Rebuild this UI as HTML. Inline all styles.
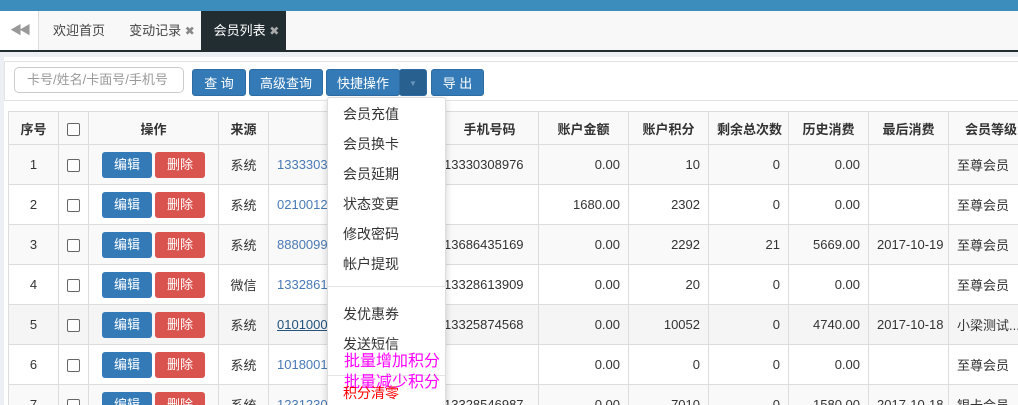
<!DOCTYPE html><html style="width:1018px;height:405px;overflow:hidden"><head><meta charset="utf-8"><style>
*{box-sizing:border-box;margin:0;padding:0}
body{width:1018px;height:405px;overflow:hidden;background:#ecf0f5;font-family:"Liberation Sans","Noto Sans CJK SC",sans-serif;font-size:13px;color:#333;position:relative}
.a{position:absolute}
.top{left:0;top:0;width:1018px;height:11px;background:#3c8dbc}
.tabs{left:0;top:11px;width:1018px;background:#f8f8f8;border-bottom:2px solid #222d32;height:41px}
.tab{top:11px;height:39px;line-height:39px;text-align:center;color:#444}
.x{color:#888;font-size:12px}
.panel{left:4px;top:57px;width:1014px;height:348px;background:#fff}
.btn{top:69px;height:27px;line-height:27px;background:#337ab7;color:#fff;border:1px solid #2e6da4;border-radius:3px;text-align:center}
table{position:absolute;left:8px;top:111px;border-collapse:collapse;table-layout:fixed;width:1040px}
td,th{border:1px solid #ddd;height:40px;padding:0 8px;white-space:nowrap;overflow:hidden}
th{height:33px;background:#f9f9f9;font-weight:bold;text-align:center}
tr:nth-child(even) td{background:#f9f9f9}
.c{text-align:center}.r{text-align:right}
.cb{display:inline-block;width:13px;height:13px;border:1px solid #666;border-radius:2px;background:#fff;vertical-align:middle}
.e,.d{display:inline-block;width:50px;height:26px;line-height:26px;color:#fff;border-radius:3px;text-align:center}
.e{background:#337ab7}.d{background:#d9534f;margin-left:3px}
.l{color:#4a7ab5}
.dd{left:327px;top:97px;width:119px;height:320px;background:#fff;border:1px solid #ddd;box-shadow:0 3px 8px rgba(0,0,0,.18);border-radius:3px}
.it{left:15px;font-size:14px;color:#333}
</style></head><body>
<div class="a top"></div>
<div class="a tabs"></div>
<div class="a" style="left:0;top:11px;width:39px;height:39px;background:#fff;border-right:1px solid #ddd;color:#999;text-align:center;line-height:39px;font-size:12px;letter-spacing:-3px">◀◀</div>
<div class="a tab" style="left:40px;width:78px">欢迎首页</div>
<div class="a tab" style="left:124px;width:76px">变动记录 <span class="x">✖</span></div>
<div class="a tab" style="left:201px;width:85px;background:#222d32;color:#fff;padding-left:6px">会员列表 <span class="x" style="color:#aaa">✖</span></div>
<div class="a panel"></div>
<div class="a" style="left:4px;top:61px;width:1014px;height:40px;border:1px solid #e3e3e3;border-right:none"></div>
<div class="a" style="left:14px;top:67px;width:170px;height:26px;border:1px solid #ccc;border-radius:5px;color:#999;line-height:24px;padding-left:12px">卡号/姓名/卡面号/手机号</div>
<div class="a btn" style="left:192px;width:54px">查 询</div>
<div class="a btn" style="left:249px;width:74px">高级查询</div>
<div class="a btn" style="left:326px;width:74px">快捷操作</div>
<div class="a btn" style="left:399px;width:28px;background:#286090;font-size:8px;color:#6b94bd">▼</div>
<div class="a btn" style="left:431px;width:53px">导 出</div>
<table>
<colgroup><col style="width:50px"><col style="width:30px"><col style="width:130px"><col style="width:50px"><col style="width:172px"><col style="width:98px"><col style="width:90px"><col style="width:80px"><col style="width:80px"><col style="width:80px"><col style="width:80px"><col style="width:100px"></colgroup>
<tr><th>序号</th><th><span class="cb"></span></th><th>操作</th><th>来源</th><th>会员卡号</th><th>手机号码</th><th>账户金额</th><th>账户积分</th><th>剩余总次数</th><th>历史消费</th><th>最后消费</th><th style="text-align:left;padding-left:16px">会员等级</th></tr>
<tr><td class="c">1</td><td class="c"><span class="cb"></span></td><td class="c"><span class="e">编辑</span><span class="d">删除</span></td><td class="c">系统</td><td class="l">13333030</td><td style="padding-left:3px">13330308976</td><td class="r">0.00</td><td class="r">10</td><td class="r">0</td><td class="r">0.00</td><td></td><td>至尊会员</td></tr>
<tr><td class="c">2</td><td class="c"><span class="cb"></span></td><td class="c"><span class="e">编辑</span><span class="d">删除</span></td><td class="c">系统</td><td class="l">02100122</td><td></td><td class="r">1680.00</td><td class="r">2302</td><td class="r">0</td><td class="r">0.00</td><td></td><td>至尊会员</td></tr>
<tr><td class="c">3</td><td class="c"><span class="cb"></span></td><td class="c"><span class="e">编辑</span><span class="d">删除</span></td><td class="c">系统</td><td class="l">88800999</td><td style="padding-left:3px">13686435169</td><td class="r">0.00</td><td class="r">2292</td><td class="r">21</td><td class="r">5669.00</td><td>2017-10-19</td><td>至尊会员</td></tr>
<tr><td class="c">4</td><td class="c"><span class="cb"></span></td><td class="c"><span class="e">编辑</span><span class="d">删除</span></td><td class="c">微信</td><td class="l">13328613</td><td style="padding-left:3px">13328613909</td><td class="r">0.00</td><td class="r">20</td><td class="r">0</td><td class="r">0.00</td><td></td><td>至尊会员</td></tr>
<tr><td class="c" style="background:#f5f5f5">5</td><td class="c" style="background:#f5f5f5"><span class="cb"></span></td><td class="c" style="background:#f5f5f5"><span class="e">编辑</span><span class="d">删除</span></td><td class="c" style="background:#f5f5f5">系统</td><td style="background:#f5f5f5;color:#23527c;text-decoration:underline">01010003</td><td style="padding-left:3px;background:#f5f5f5">13325874568</td><td class="r" style="background:#f5f5f5">0.00</td><td class="r" style="background:#f5f5f5">10052</td><td class="r" style="background:#f5f5f5">0</td><td class="r" style="background:#f5f5f5">4740.00</td><td style="background:#f5f5f5">2017-10-18</td><td style="background:#f5f5f5">小梁测试...</td></tr>
<tr><td class="c">6</td><td class="c"><span class="cb"></span></td><td class="c"><span class="e">编辑</span><span class="d">删除</span></td><td class="c">系统</td><td class="l">1018001</td><td></td><td class="r">0.00</td><td class="r">0</td><td class="r">0</td><td class="r">0.00</td><td></td><td>至尊会员</td></tr>
<tr><td class="c">7</td><td class="c"><span class="cb"></span></td><td class="c"><span class="e">编辑</span><span class="d">删除</span></td><td class="c">系统</td><td class="l">12312301</td><td style="padding-left:3px">13328546987</td><td class="r">0.00</td><td class="r">7010</td><td class="r">0</td><td class="r">1580.00</td><td>2017-10-18</td><td>银卡会员</td></tr>
</table>
<div class="a dd">
<div class="a it" style="top:6px">会员充值</div>
<div class="a it" style="top:36px">会员换卡</div>
<div class="a it" style="top:66px">会员延期</div>
<div class="a it" style="top:96px">状态变更</div>
<div class="a it" style="top:126px">修改密码</div>
<div class="a it" style="top:156px">帐户提现</div>
<div class="a" style="left:0;top:188px;width:117px;height:1px;background:#e5e5e5"></div>
<div class="a it" style="top:206px">发优惠券</div>
<div class="a it" style="top:236px">发送短信</div>
<div class="a it" style="top:249px;left:16px;color:#f0f;font-size:16px">批量增加积分</div>
<div class="a" style="left:0;top:277px;width:117px;height:1px;background:#e5e5e5"></div>
<div class="a it" style="top:270px;left:16px;color:#f0f;font-size:16px">批量减少积分</div>
<div class="a it" style="top:285px;color:#f00">积分清零</div>
</div>
</body></html>
